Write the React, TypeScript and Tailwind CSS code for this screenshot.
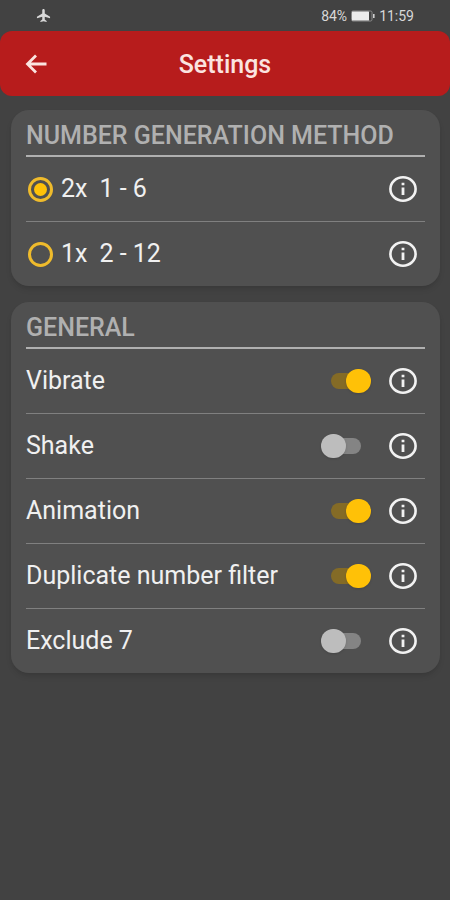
import { useState } from 'react';
import { clsx } from 'clsx';

type Method = { id: string; dice: string; range: string };
type Option = { id: string; title: string; enabled: boolean };

const methods: Method[] = [
  { id: 'two-dice', dice: '2x', range: '1 - 6' },
  { id: 'one-die', dice: '1x', range: '2 - 12' },
];

const defaultOptions: Option[] = [
  { id: 'vibrate', title: 'Vibrate', enabled: true },
  { id: 'shake', title: 'Shake', enabled: false },
  { id: 'animation', title: 'Animation', enabled: true },
  { id: 'duplicate', title: 'Duplicate number filter', enabled: true },
  { id: 'exclude', title: 'Exclude 7', enabled: false },
];

const StatusBar = () => (
  <div className="flex h-[31px] items-center justify-between px-9 text-[14px] leading-4 text-[#d8d8d8]">
    <svg viewBox="0 0 24 24" className="size-[15px]" fill="currentColor" aria-label="Airplane mode">
      <path d="M12 1.5c-1.3 0-2 1-2 2.3v5L1.5 14v2.4l8.5-2.3v4.4L7 20.6v1.9l5-1.2 5 1.2v-1.9l-3-2.1v-4.4l8.5 2.3V14L14 8.8v-5c0-1.3-.7-2.3-2-2.3z" />
    </svg>
    <div className="flex items-center gap-1">
      <span>84%</span>
      <svg viewBox="0 0 24 12" className="h-3 w-6" aria-hidden="true">
        <rect x="0.5" y="1" width="20.5" height="10" rx="1.5" fill="none" stroke="#8a8a8a" />
        <rect x="1" y="1.5" width="17" height="9" rx="0.5" fill="#ececec" />
        <path d="M22.8 4v4" stroke="#cfcfcf" strokeWidth="1.6" />
      </svg>
      <span>11:59</span>
    </div>
  </div>
);

const Header = () => (
  <header className="grid h-[65px] grid-cols-[48px_1fr_48px] items-center rounded-xl bg-[#b71c1c] px-3 text-[#fbe4e0]">
    <button type="button" aria-label="Back" className="flex size-12 items-center justify-center">
      <svg viewBox="0 0 22 20" className="h-5 w-[22px]" fill="none" stroke="currentColor" strokeWidth="2.8">
        <path d="M21.5 10H2.5M11 1.5L2.5 10l8.5 8.5" />
      </svg>
    </button>
    <h1 className="pt-0.5 text-center text-[25px] leading-8 font-medium">Settings</h1>
  </header>
);

const InfoButton = ({ title }: { title: string }) => (
  <button type="button" aria-label={`About ${title}`} className="mr-1.5 ml-4 flex size-8 items-center justify-center">
    <svg viewBox="0 0 28 26" className="h-[26px] w-7" fill="none">
      <ellipse cx="14" cy="13" rx="12.6" ry="11.7" stroke="#f2f2f2" strokeWidth="2.6" />
      <path d="M14 11.6v7.4M14 6.8v2.5" stroke="#f2f2f2" strokeWidth="2.8" />
    </svg>
  </button>
);

type SwitchProps = { id: string; checked: boolean; onChange: (checked: boolean) => void };

const Switch = ({ id, checked, onChange }: SwitchProps) => (
  <span className="relative flex h-6 w-[50px] items-center justify-center">
    <span className={clsx('h-4 w-[30px] rounded-full', checked ? 'bg-[#846b26]' : 'bg-[#848484]')} />
    <span
      className={clsx(
        'absolute top-0 h-6 w-[25px] rounded-full shadow-sm',
        checked ? 'right-0 bg-[#ffc107]' : 'left-0 bg-[#bdbdbd]',
      )}
    />
    <input
      id={id}
      type="checkbox"
      role="switch"
      checked={checked}
      onChange={(e) => onChange(e.target.checked)}
      className="absolute inset-0 cursor-pointer appearance-none"
    />
  </span>
);

const Card = ({ title, children }: { title: string; children: React.ReactNode }) => (
  <section className="rounded-[18px] bg-[#505050] px-[15px] shadow-md">
    <h2 className="border-b-2 border-[#b0b0b0] pt-3 pb-[5px] text-[25px] leading-7 font-medium whitespace-nowrap text-[#b0b0b0]">
      {title}
    </h2>
    <ul className="divide-y divide-[#808080]">{children}</ul>
  </section>
);

export default function App() {
  const [method, setMethod] = useState('two-dice');
  const [options, setOptions] = useState(defaultOptions);

  const onToggle = (id: string, enabled: boolean) => {
    setOptions(options.map((item) => (item.id === id ? { ...item, enabled } : item)));
  };

  return (
    <div className="min-h-screen bg-[#424242] font-['Roboto',sans-serif] text-[#f0f0f0]">
      <StatusBar />
      <Header />
      <main className="flex flex-col gap-4 pt-[14px] pr-[10px] pb-4 pl-[11px]">
        <Card title="NUMBER GENERATION METHOD">
          {methods.map((item) => (
            <li key={item.id} className="flex h-[65px] items-center last:h-16">
              <label htmlFor={item.id} className="flex flex-1 cursor-pointer items-center gap-2 text-[25px] leading-8">
                <span className="relative ml-0.5 flex h-[25px] w-[25px] items-center justify-center rounded-full border-[3px] border-[#efbb2c]">
                  {method === item.id && <span className="size-[13px] rounded-full bg-[#ffc107]" />}
                  <input
                    id={item.id}
                    type="radio"
                    name="method"
                    checked={method === item.id}
                    onChange={() => setMethod(item.id)}
                    className="absolute inset-0 appearance-none"
                  />
                </span>
                <span className="flex gap-3">
                  <span>{item.dice}</span>
                  <span>{item.range}</span>
                </span>
              </label>
              <InfoButton title={`${item.dice} ${item.range}`} />
            </li>
          ))}
        </Card>
        <Card title="GENERAL">
          {options.map((item) => (
            <li key={item.id} className="flex h-[65px] items-center last:h-16">
              <label htmlFor={item.id} className="flex-1 text-[25px] leading-8">
                {item.title}
              </label>
              <Switch id={item.id} checked={item.enabled} onChange={(checked) => onToggle(item.id, checked)} />
              <InfoButton title={item.title} />
            </li>
          ))}
        </Card>
      </main>
    </div>
  );
}
